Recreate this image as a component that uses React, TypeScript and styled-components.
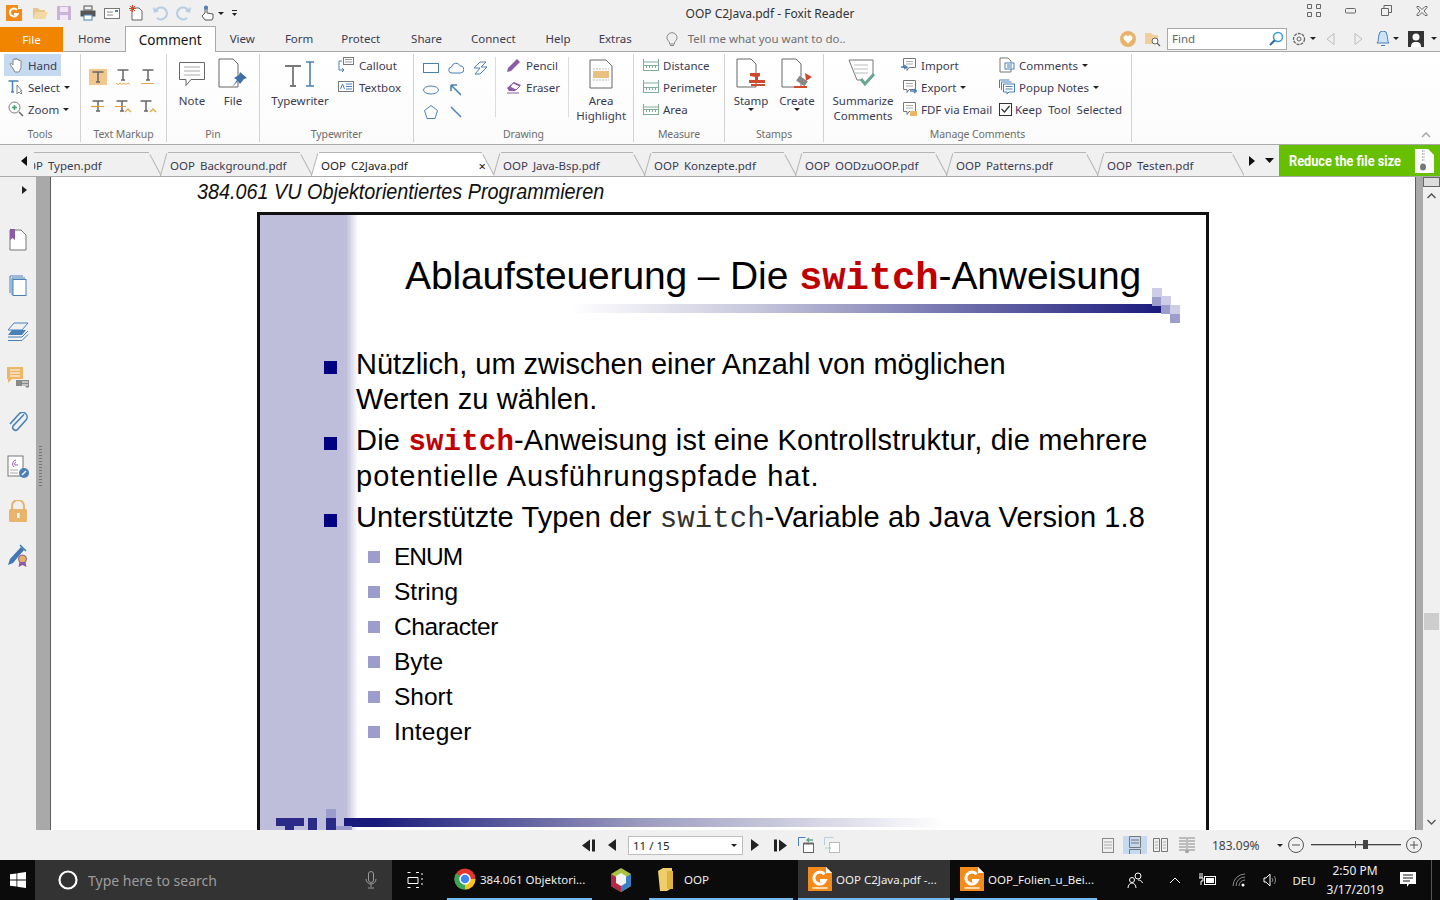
import React from 'react';
import styled, { createGlobalStyle } from 'styled-components';

const uiFont = `'Noto Sans', 'DejaVu Sans', sans-serif`;
const slideFont = `'Liberation Sans', Arial, sans-serif`;
const blue = '#4a80b8';
const orange = '#e9b36c';
const ink = '#2b2b3f';

const GlobalStyle = createGlobalStyle`
  html, body { margin: 0; padding: 0; width: 1440px; height: 900px; overflow: hidden; background: #f0f0f0; }
  body { font-family: ${uiFont}; font-size: 11.5px; color: ${ink}; }
  * { box-sizing: border-box; }
`;

/* ---------- drawings ---------- */

type IconProps = { w?: number; h?: number; children: React.ReactNode; vb?: string };

const SvgBase = styled.svg`
  display: block;
  flex: none;
`;

const Svg = ({ w = 16, h = 16, vb, children }: IconProps) => (
  <SvgBase width={w} height={h} viewBox={vb || `0 0 ${w} ${h}`} fill="none">
    {children}
  </SvgBase>
);

const Spacer = styled.span<{ $w: number }>`
  width: ${p => p.$w}px;
  flex: none;
`;

const Caret = styled.span<{ $tight?: boolean }>`
  display: inline-block;
  width: 0;
  height: 0;
  flex: none;
  margin-left: ${p => (p.$tight ? -6 : 0)}px;
  border-left: 3px solid transparent;
  border-right: 3px solid transparent;
  border-top: 3px solid #222;
`;

const FoxitLogo = ({ size = 16, label = false }: { size?: number; label?: boolean }) => (
  <Svg w={size} h={size} vb="0 0 16 16">
    <path d="M0 0h12l4 4v12H0z" fill="#f28a1c" />
    <path d="M12 0l4 4h-4z" fill="#fff" />
    <path d="M11 4.800A4 4 0 1 0 11.600 9H8" stroke="#fff" strokeWidth="2" fill="none" />
    {label && <rect x="3" y="13.300" width="10" height="1.400" fill="#ffd9a8" />}
  </Svg>
);

const T = ({ color = '#666' }: { color?: string }) => (
  <path d="M2.500 3h11M8 3v10M6 13h4" stroke={color} strokeWidth="1.500" />
);

const markupIcons = [
  <Svg w={18} h={16} key="0"><rect width="18" height="16" fill="#f2c78e" /><g transform="translate(1 0)"><T /></g></Svg>,
  <Svg w={18} h={16} key="1"><g transform="translate(1 -2)"><T /></g><path d="M2 14l2 1.500 2-1.500 2 1.500 2-1.500 2 1.500 2-1.500 2 1.500" stroke="#e0ab55" /></Svg>,
  <Svg w={18} h={16} key="2"><g transform="translate(1 -2)"><T /></g><path d="M2 14.500h13" stroke="#e0ab55" /></Svg>,
  <Svg w={18} h={16} key="3"><g transform="translate(1 0)"><T /></g><path d="M2 8.500h13" stroke="#e0a030" strokeWidth="1.200" /></Svg>,
  <Svg w={18} h={16} key="4"><g transform="translate(0 0)"><T /></g><path d="M1 8.500h11M11 14l3-3 3 3" stroke="#e0a030" strokeWidth="1.100" /></Svg>,
  <Svg w={18} h={16} key="5"><g transform="translate(-1 0)"><T /></g><path d="M11 14l3-3 3 3" stroke="#e0a030" strokeWidth="1.100" /></Svg>,
];

const shapeIcons = [
  <Svg key="0"><rect x="0.500" y="3.500" width="15" height="9" stroke={blue} /></Svg>,
  <Svg key="1"><path d="M4 13a3 3 0 0 1-.5-6 4.500 4.500 0 0 1 8.500-1.200A3.600 3.600 0 0 1 12.500 13z" stroke={blue} /></Svg>,
  <Svg key="2"><path d="M1 8l6-6h6L8 7h6l-7 7H2l5-6z" stroke={blue} /></Svg>,
  <Svg key="3"><ellipse cx="8" cy="8" rx="7.500" ry="4" stroke={blue} /></Svg>,
  <Svg key="4"><path d="M3 3l10 10M3 3h6M3 3v6" stroke={blue} strokeWidth="1.600" /></Svg>,
  <span key="5" />,
  <Svg key="6"><path d="M8 1.500l6.500 5-2.500 8H4l-2.500-8z" stroke={blue} /></Svg>,
  <Svg key="7"><path d="M3 3l10 10" stroke={blue} strokeWidth="1.400" /></Svg>,
  <span key="8" />,
];

const PageShape = () => <path d="M1 1h14l5 5v23H1z" stroke="#666" fill="#fff" />;

const MeasureIcon = ({ top = 0 }: { top?: number }) => (
  <Svg>
    <path d={`M0.500 ${2 + top}v10M15.500 ${2 + top}v10M1 ${5 + top}h14`} stroke="#7fae9a" />
    <rect x="0.500" y="8.500" width="15" height="5" stroke="#7fae9a" />
    <path d="M3.500 9v2M6.500 9v2M9.500 9v2M12.500 9v2" stroke="#7fae9a" />
  </Svg>
);

const CommentBox = ({ children }: { children?: React.ReactNode }) => (
  <Svg>
    <path d="M2.500 1.500h12v9H8l-2 3v-3H2.500z" stroke="#777" fill="#fff" />
    <path d="M5 4.500h7M5 7h7" stroke="#aaa" />
    {children}
  </Svg>
);

const sidebarIcons = [
  { nudge: 0, icon: <Svg w={18} h={22}><path d="M1 1h11l5 5v15H1z" stroke="#777" fill="#fff" /><path d="M1 0h5v11L3.500 9 1 11z" fill="#8b5aa8" /></Svg> },
  { nudge: 1, icon: <Svg w={18} h={22}><path d="M1 18V1h13M3 20V3h13" stroke={blue} /><rect x="4" y="4.500" width="13" height="16" stroke={blue} fill="#fff" /></Svg> },
  { nudge: 2, icon: <Svg w={22} h={20}><path d="M7 1h14l-6 7H1zM1 15h14l6-6" stroke={blue} /><path d="M5 8h14l-4 5H1z" fill={blue} /><path d="M1 18.500h14l6-6" stroke={blue} /></Svg> },
  { nudge: 3, icon: <Svg w={22} h={22}><path d="M0 0h16v12H5l-4 4v-4H0z" fill="#edb566" /><path d="M3 3h10M3 6h10M3 9h10" stroke="#fff" /><path d="M9 13h13v7l-2 1-2-2H9z" fill="#888" /><path d="M15 15h6M15 18h6" stroke="#fff" /></Svg> },
  { nudge: 3, icon: <Svg w={20} h={22}><path d="M16 3.500L5 15a3 3 0 0 0 4 4l9-10a4.500 4.500 0 0 0-7-6L2 13" stroke={blue} strokeWidth="1.600" transform="translate(0 -1)" /></Svg> },
  { nudge: 1, icon: <Svg w={22} h={23}><rect x="1" y="1" width="15" height="20" stroke="#777" fill="#fff" /><path d="M9 5a4 4 0 0 0-2 7M9 7a2 2 0 0 0-1 3h3" stroke="#9b5fb5" /><path d="M3 15h8M3 18h8" stroke="#aaa" /><circle cx="17" cy="18" r="5" fill={blue} /><path d="M15 20l4-4" stroke="#fff" strokeWidth="1.500" /></Svg> },
  { nudge: 1, icon: <Svg w={20} h={23}><path d="M4 10V6a6 6 0 0 1 12 0v4" stroke={orange} strokeWidth="2" /><rect x="1" y="9" width="18" height="13" rx="1.500" fill={orange} /><rect x="9" y="13" width="2.500" height="5" fill="#fff" /></Svg> },
  { nudge: 0, icon: <Svg w={22} h={24}><path d="M1 21l2-6L14 3l3 3L6 19z" fill="#3f78b5" /><path d="M13 1l6 6" stroke="#3f78b5" strokeWidth="1.500" /><circle cx="15.500" cy="15" r="4" fill="#e7b25f" stroke="#8b5aa8" /><path d="M12.500 18l-1 5 4-2 4 2-1-5" fill="#8b5aa8" /></Svg> },
];

/* ---------- title bar ---------- */

const TitleBar = styled.header`
  height: 26px;
  display: flex;
  align-items: center;
  background: #f0f0f0;
`;

const QuickAccess = styled.div`
  display: flex;
  align-items: center;
  gap: 8px;
  padding-left: 6px;
  width: 560px;
`;

const LogoSlot = styled.span`
  margin-right: 2px;
`;

const WindowTitle = styled.div`
  flex: 1;
  text-align: center;
  padding-right: 327px;
  font-size: 12px;
  color: #333;
  white-space: nowrap;
`;

const WindowButtons = styled.div`
  display: flex;
  align-items: center;
  gap: 24px;
  padding: 0 12px 5px 0;
`;

/* ---------- menu tabs ---------- */

const MenuBar = styled.nav`
  height: 26px;
  display: flex;
  align-items: stretch;
  background: #f0f0f0;
  border-bottom: 1px solid #a9a9a9;
`;

const FileTab = styled.div`
  width: 63px;
  height: 25px;
  margin-top: 1px;
  background: #f28500;
  color: #fff;
  display: flex;
  align-items: center;
  justify-content: center;
`;

const MenuTab = styled.div<{ $left: number }>`
  margin-left: ${p => p.$left}px;
  display: flex;
  align-items: center;
  color: #3b3b52;
`;

const ActiveMenuTab = styled.div`
  width: 91px;
  height: 26px;
  margin-left: 14px;
  background: #fff;
  border: 1px solid #a9a9a9;
  border-bottom: none;
  display: flex;
  align-items: center;
  justify-content: center;
  font-size: 13.500px;
  color: #111;
`;

const TellMe = styled.div`
  margin-left: 33px;
  display: flex;
  align-items: center;
  gap: 9px;
  color: #6f6f6f;
`;

const MenuRight = styled.div`
  margin-left: auto;
  display: flex;
  align-items: center;
  padding-right: 3px;
`;

const FindBox = styled.div`
  width: 120px;
  height: 22px;
  margin: 0 5px 0 6px;
  background: #fff;
  border: 1px solid #a9a9a9;
  display: flex;
  align-items: center;
  justify-content: space-between;
  padding: 0 2px 0 4px;
  color: #666;
`;

/* ---------- ribbon ---------- */

const Ribbon = styled.section`
  height: 93px;
  display: flex;
  background: linear-gradient(#fff, #fbfbfb);
  border-bottom: 1px solid #a9a9a9;
  position: relative;
`;

const Group = styled.div<{ $w: number }>`
  width: ${p => p.$w}px;
  flex: none;
  display: flex;
  flex-direction: column;
  border-right: 1px solid #d2d2d2;
  margin: 2px 0 2px;
`;

const GroupBody = styled.div`
  height: 67px;
  display: flex;
  align-items: flex-start;
`;

const GroupLabel = styled.div`
  margin-top: auto;
  height: 16px;
  line-height: 16px;
  text-align: center;
  font-size: 10.500px;
  letter-spacing: -0.1px;
  color: #6d6d6d;
`;

const SmallColumn = styled.div<{ $left: number; $w?: number }>`
  margin-left: ${p => p.$left}px;
  width: ${p => (p.$w ? `${p.$w}px` : 'auto')};
  flex: none;
  display: flex;
  flex-direction: column;
`;

const SmallTool = styled.div<{ $active?: boolean; $gap?: number; $pad?: number; $w?: number; $wide?: boolean }>`
  height: 22px;
  width: ${p => (p.$w ? `${p.$w}px` : 'auto')};
  padding-left: ${p => p.$pad ?? 0}px;
  display: flex;
  align-items: center;
  gap: ${p => p.$gap ?? 4}px;
  white-space: nowrap;
  word-spacing: ${p => (p.$wide ? 3 : 0)}px;
  color: #3b3b52;
  background: ${p => (p.$active ? '#c5d9f1' : 'transparent')};
`;

const LargeTool = styled.div<{ $w: number; $left?: number }>`
  width: ${p => p.$w}px;
  margin-left: ${p => p.$left ?? 0}px;
  flex: none;
  display: flex;
  flex-direction: column;
  align-items: center;
  line-height: 15px;
  color: #3b3b52;
  text-align: center;
`;

const LargeIcon = styled.div`
  height: 39px;
  display: flex;
  align-items: center;
  justify-content: center;
`;

const IconGrid = styled.div<{ $cols: number; $cw: number; $ch: number; $left: number; $top: number }>`
  display: grid;
  grid-template-columns: repeat(${p => p.$cols}, ${p => p.$cw}px);
  grid-auto-rows: ${p => p.$ch}px;
  place-items: center;
  margin: ${p => p.$top}px 0 0 ${p => p.$left}px;
`;

const InnerRule = styled.div<{ $left: number }>`
  width: 1px;
  height: 60px;
  margin: 3px 0 0 ${p => p.$left}px;
  background: #dcdcdc;
  flex: none;
`;

const Checkbox = styled.span`
  width: 13px;
  height: 13px;
  border: 1px solid #333;
  background: #fff;
  display: flex;
  align-items: center;
  justify-content: center;
  flex: none;
`;

const CollapseButton = styled.div`
  position: absolute;
  right: 9px;
  bottom: 6px;
`;

/* ---------- document tabs ---------- */

const DocBar = styled.section`
  height: 32px;
  display: flex;
  align-items: stretch;
  background: #f0f0f0;
  border-bottom: 1px solid #a9a9a9;
`;

const DocArrow = styled.div<{ $w: number; $pad?: number }>`
  width: ${p => p.$w}px;
  flex: none;
  display: flex;
  align-items: center;
  justify-content: center;
  padding-left: ${p => p.$pad ?? 0}px;
`;

const DocStrip = styled.div`
  width: 1210px;
  flex: none;
  overflow: hidden;
  display: flex;
  padding-top: 7px;
`;

const DocTab = styled.div<{ $w: number; $active?: boolean; $shift?: number }>`
  width: ${p => p.$w}px;
  margin-left: ${p => p.$shift ?? 0}px;
  flex: none;
  height: 24px;
  position: relative;
  display: flex;
  align-items: center;
  padding: 2px 0 0 12px;
  color: ${p => (p.$active ? '#222' : '#3b3b52')};
  background: ${p =>
    p.$active
      ? `linear-gradient(106deg, transparent 50%, #fff 50%) left / 12px 100% no-repeat,
         linear-gradient(62deg, #fff 50%, transparent 50%) right / 14px 100% no-repeat,
         linear-gradient(#fff, #fff) 12px 0 / calc(100% - 26px) 100% no-repeat`
      : 'transparent'};
  white-space: nowrap;
  word-spacing: 2px;
  z-index: ${p => (p.$active ? 2 : 1)};

  &::before,
  &::after {
    content: '';
    position: absolute;
    top: 1px;
    width: 1px;
    height: 24px;
    background: #b5b5b5;
  }

  &::before {
    left: 5px;
    transform: rotate(16deg);
  }

  &::after {
    right: ${p => (p.$active ? 6 : 2)}px;
    transform: rotate(-28deg);
  }
`;

const TabTop = styled.span<{ $active?: boolean }>`
  position: absolute;
  top: 0;
  left: 10px;
  right: ${p => (p.$active ? 13 : 9)}px;
  height: 1px;
  background: #b5b5b5;
`;

const TabClose = styled.span`
  position: absolute;
  right: 9px;
  top: 8px;
  font-size: 13px;
  line-height: 13px;
  color: #111;
`;

const ReduceBanner = styled.div`
  margin-left: auto;
  width: 161px;
  background: #66bf00;
  color: #fff;
  display: flex;
  align-items: center;
  justify-content: space-between;
  padding: 0 6px 0 10px;
`;

const BannerText = styled.span`
  display: inline-block;
  font-family: 'Roboto', ${uiFont};
  font-weight: 700;
  font-size: 15px;
  white-space: nowrap;
  transform-origin: left center;
  transform: scaleX(0.85);
  width: 115px;
`;

/* ---------- work area ---------- */

const Work = styled.main`
  height: 653px;
  display: flex;
  overflow: hidden;
`;

const SideRail = styled.aside`
  width: 36px;
  flex: none;
  background: #f0f0f0;
  display: flex;
  flex-direction: column;
  align-items: center;
  padding-top: 8px;
`;

const RailCaret = styled.div`
  align-self: flex-end;
  margin: 1px 9px 23px 0;
  width: 0;
  height: 0;
  border-top: 4px solid transparent;
  border-bottom: 4px solid transparent;
  border-left: 5px solid #222;
`;

const RailIcon = styled.div<{ $nudge: number }>`
  height: 45.200px;
  padding-top: ${p => p.$nudge * 2}px;
  display: flex;
  align-items: center;
  justify-content: center;
`;

const Splitter = styled.div`
  width: 15px;
  flex: none;
  background: #a9a9a9;
  border-right: 1px solid #5f5f5f;
  position: relative;

  &::after {
    content: '';
    position: absolute;
    left: 3px;
    top: 268px;
    width: 3px;
    height: 42px;
    background-image: radial-gradient(#777 0.700px, transparent 0.800px);
    background-size: 2px 3px;
  }
`;

const PageArea = styled.div`
  flex: 1;
  background: #fff;
  padding-left: 146px;
  min-width: 0;
`;

const RunningHead = styled.div`
  height: 35px;
  padding-bottom: 6px;
  display: flex;
  align-items: center;
  font-family: ${slideFont};
  font-style: italic;
  font-size: 22px;
  color: #111;
  transform-origin: left center;
  transform: scaleX(0.9);
  white-space: nowrap;
`;

const Slide = styled.article`
  width: 952px;
  height: 640px;
  margin-left: 60px;
  border: 3px solid #111;
  border-bottom: none;
  position: relative;
  background: linear-gradient(90deg, #bebedb 0, #bebedb 86px, #fff 98px);
  padding-left: 64px;
  font-family: ${slideFont};
  color: #000;
`;

const SlideTitle = styled.h1`
  margin: 0;
  padding-top: 36px;
  padding-left: 81px;
  height: 87px;
  font-weight: 400;
  font-size: 39px;
  line-height: 50px;
  letter-spacing: -0.130px;
  white-space: nowrap;
`;

const Code = styled.span<{ $plain?: boolean; $size: number }>`
  font-family: 'Liberation Mono', 'Courier New', monospace;
  font-weight: ${p => (p.$plain ? 400 : 700)};
  color: ${p => (p.$plain ? '#333' : '#c00000')};
  font-size: ${p => p.$size}px;
`;

const TitleRule = styled.div`
  position: absolute;
  left: 311px;
  top: 89px;
  width: 592px;
  height: 9px;
  background: linear-gradient(90deg, #fff, #c9c9de 30%, #1a1a7c 100%);
`;

const Pixel = styled.i<{ $x: number; $y: number; $dark?: boolean }>`
  position: absolute;
  left: ${p => p.$x}px;
  top: ${p => p.$y}px;
  width: 10px;
  height: 9px;
  background: ${p => (p.$dark ? '#9c9ccd' : '#cdcde6')};
`;

const Points = styled.ul`
  list-style: none;
  margin: 0;
  padding: 45px 0 0 0;
`;

const Point = styled.li`
  display: flex;
  font-size: 29px;
  margin-bottom: 5.700px;
  white-space: nowrap;
`;

const PointLine = styled.span<{ $track?: number }>`
  display: block;
  height: 35.300px;
  line-height: 35.300px;
  letter-spacing: ${p => p.$track ?? 0}px;
`;

const Bullet = styled.span<{ $sub?: boolean }>`
  width: ${p => (p.$sub ? 12 : 13)}px;
  height: ${p => (p.$sub ? 12 : 13)}px;
  flex: none;
  background: ${p => (p.$sub ? '#9c9ccd' : '#000080')};
  margin-top: ${p => (p.$sub ? 12 : 14)}px;
  margin-right: ${p => (p.$sub ? 14 : 19)}px;
`;

const SubPoints = styled.ul`
  list-style: none;
  margin: -2px 0 0 44px;
  padding: 0;
`;

const SubPoint = styled.li<{ $track?: number }>`
  display: flex;
  font-size: 24.500px;
  line-height: 35px;
  letter-spacing: ${p => p.$track ?? 0}px;
  white-space: nowrap;
`;

const FootRule = styled.div`
  position: absolute;
  left: 84px;
  top: 603px;
  width: 600px;
  height: 9px;
  background: linear-gradient(90deg, #1a1a7c, #1a1a7c 5%, #9c9cc0 50%, #fff);
`;

const FootBlock = styled.i<{ $x: number; $y: number; $w: number; $h: number; $light?: boolean }>`
  position: absolute;
  left: ${p => p.$x}px;
  top: ${p => p.$y}px;
  width: ${p => p.$w}px;
  height: ${p => p.$h}px;
  background: ${p => (p.$light ? '#9c9ccd' : '#2a2a88')};
`;

const RightGutter = styled.div`
  width: 8px;
  flex: none;
  background: #a9a9a9;
  border-left: 1px solid #5f5f5f;
`;

const ScrollTrack = styled.div`
  width: 17px;
  flex: none;
  background: #f0f0f0;
  position: relative;
  display: flex;
  flex-direction: column;
  align-items: center;
`;

const SplitBox = styled.div`
  width: 17px;
  height: 10px;
  background: #dcdcdc;
  border: 1px solid #666;
`;

const ScrollArrow = styled.div<{ $bottom?: boolean }>`
  height: 17px;
  display: flex;
  align-items: center;
  justify-content: center;
  margin-top: ${p => (p.$bottom ? 'auto' : '0')};
`;

const ScrollThumb = styled.div`
  position: absolute;
  left: 1px;
  top: 436px;
  width: 15px;
  height: 17px;
  background: #cdcdcd;
`;

/* ---------- status bar ---------- */

const StatusBar = styled.footer`
  height: 30px;
  display: flex;
  align-items: center;
  background: #f0f0f0;
  padding-left: 582px;
`;

const PageBox = styled.div`
  width: 115px;
  height: 19px;
  margin: 0 8px 0 12px;
  background: #fff;
  border: 1px solid #bdbdbd;
  display: flex;
  align-items: center;
  justify-content: space-between;
  padding: 0 5px 0 4px;
  color: #222;
`;

const ViewMode = styled.div<{ $active?: boolean; $left: number }>`
  width: 24px;
  height: 18px;
  margin-left: ${p => p.$left}px;
  display: flex;
  align-items: center;
  justify-content: center;
  background: ${p => (p.$active ? '#c5d9f1' : 'transparent')};
`;

const ZoomValue = styled.span`
  margin-left: 13px;
  width: 65px;
  font-size: 12px;
  color: #444;
`;

const SliderTrack = styled.div`
  width: 90px;
  height: 2px;
  margin: 0 5px 0 7px;
  background: linear-gradient(#444 50%, #bbb 50%);
  position: relative;
`;

const SliderThumb = styled.span`
  position: absolute;
  left: 52px;
  top: -4px;
  width: 5px;
  height: 9px;
  background: #444;
`;

const SliderTick = styled.span`
  position: absolute;
  left: 44px;
  top: -3px;
  width: 1px;
  height: 7px;
  background: #555;
`;

/* ---------- taskbar ---------- */

const Taskbar = styled.footer`
  height: 40px;
  display: flex;
  align-items: stretch;
  background: #0b0b0b;
  color: #eee;
  font-size: 11.500px;
`;

const StartButton = styled.div`
  width: 35px;
  flex: none;
  display: flex;
  align-items: center;
  justify-content: center;
`;

const SearchBox = styled.div`
  width: 357px;
  flex: none;
  background: #333;
  display: flex;
  align-items: center;
  padding: 0 15px 0 23px;
  color: #9c9c9c;
  font-size: 14px;
`;

const SearchText = styled.span`
  margin-left: 10px;
  flex: 1;
`;

const TaskIcon = styled.div<{ $w: number }>`
  width: ${p => p.$w}px;
  flex: none;
  display: flex;
  align-items: center;
  justify-content: center;
`;

const TaskApp = styled.div<{ $w: number; $active?: boolean; $left?: number; $pad?: number; $gap?: number }>`
  width: ${p => p.$w}px;
  margin-left: ${p => p.$left ?? 0}px;
  flex: none;
  display: flex;
  align-items: center;
  gap: ${p => p.$gap ?? 4}px;
  padding-left: ${p => p.$pad ?? 9}px;
  background: ${p => (p.$active ? '#333' : 'transparent')};
  border-bottom: 2px solid #76b9ed;
  white-space: nowrap;
`;

const Tray = styled.div`
  margin-left: auto;
  display: flex;
  align-items: center;
`;

const Clock = styled.div`
  width: 52px;
  display: flex;
  flex-direction: column;
  align-items: center;
  font-size: 12px;
  line-height: 19px;
  white-space: nowrap;
`;

const ShowDesktop = styled.span`
  width: 9px;
  height: 40px;
  flex: none;
  margin-left: -4px;
  border-left: 1px solid #555;
`;

/* ---------- data ---------- */

const menuItems: [string, number][] = [
  ['View', 14], ['Form', 30], ['Protect', 28], ['Share', 31], ['Connect', 29], ['Help', 30], ['Extras', 28],
];

const docTabs = [
  { name: 'OOP Typen.pdf', w: 152, shift: -28 },
  { name: 'OOP Background.pdf', w: 151 },
  { name: 'OOP C2Java.pdf', w: 186, active: true },
  { name: 'OOP Java-Bsp.pdf', w: 151, shift: -4 },
  { name: 'OOP Konzepte.pdf', w: 151 },
  { name: 'OOP OODzuOOP.pdf', w: 151 },
  { name: 'OOP Patterns.pdf', w: 151 },
  { name: 'OOP Testen.pdf', w: 146 },
];

const subItems = [
  { label: 'ENUM', track: -1 },
  { label: 'String' },
  { label: 'Character', track: -0.4 },
  { label: 'Byte' },
  { label: 'Short' },
  { label: 'Integer', track: 0.2 },
];

const titlePixels = [
  { x: 892, y: 73 }, { x: 892, y: 82, dark: true }, { x: 901, y: 81 }, { x: 901, y: 90, dark: true }, { x: 910, y: 90 }, { x: 910, y: 99, dark: true },
];

export default function App() {
  return (
    <>
      <GlobalStyle />
      <TitleBar>
        <QuickAccess>
          <LogoSlot><FoxitLogo /></LogoSlot>
          <Svg><path d="M1 3h5l2 2h5v2H4L1 14z" fill="#e8c58a" /><path d="M4 7h12l-3 7H1z" fill="#f3d9a6" /></Svg>
          <Svg><path d="M1 1h14v14H1z" fill="#c9b4d8" /><rect x="4" y="2" width="8" height="5" fill="#efe8f4" /><rect x="4" y="10" width="8" height="5" fill="#efe8f4" /></Svg>
          <Svg><rect x="4" y="1" width="8" height="4" stroke="#555" /><rect x="0.500" y="5.500" width="15" height="6" fill="#555" /><rect x="4" y="10" width="8" height="5" fill="#fff" stroke="#4a80b8" /></Svg>
          <Svg><rect x="0.500" y="3.500" width="15" height="10" stroke="#777" fill="#fff" /><path d="M3 7h6M3 10h6" stroke="#888" /><rect x="11" y="5" width="3" height="2" fill="#4a80b8" /></Svg>
          <Svg><path d="M4 3h7l3 3v9H4z" stroke="#666" fill="#fff" /><path d="M4.500 0v7M1 3.500h7M2 1l5 5M7 1L2 6" stroke="#d9472b" /></Svg>
          <Svg><path d="M4 5a6 6 0 1 1 1 8" stroke="#b6cde3" strokeWidth="2" /><path d="M1 2l1 6 5-2z" fill="#b6cde3" /></Svg>
          <Svg><path d="M12 5a6 6 0 1 0-1 8" stroke="#b6cde3" strokeWidth="2" /><path d="M15 2l-1 6-5-2z" fill="#b6cde3" /></Svg>
          <Svg><path d="M5 8V2.500a1 1 0 0 1 2 0V8l6 1v4l-1 2H5l-3-4z" stroke="#555" fill="#fff" /><circle cx="6" cy="2.500" r="2" fill="#4a80b8" /></Svg>
          <Caret $tight />
          <Svg w={5} h={6}><path d="M0 0.500h5" stroke="#222" /><path d="M0 3h5L2.500 6z" fill="#222" /></Svg>
        </QuickAccess>
        <WindowTitle>OOP C2Java.pdf - Foxit Reader</WindowTitle>
        <WindowButtons>
          <Svg w={14} h={13}><path d="M0.500 0.500h4v4h-4zM9.500 0.500h4v4h-4zM0.500 8.500h4v4h-4zM9.500 8.500h4v4h-4z" stroke="#666" /></Svg>
          <Svg w={12} h={6}><rect x="0.500" y="0.500" width="10" height="4.500" rx="1" stroke="#666" /></Svg>
          <Svg w={11} h={11}><path d="M3 3V0.500h7.500v7H8M0.500 3.500h7v7h-7z" stroke="#666" /></Svg>
          <Svg w={12} h={10}><path d="M1 0.500h2l3 3 3-3h2v1L8 5l3 3.500v1H9l-3-3-3 3H1v-1L4 5 1 1.500z" stroke="#666" /></Svg>
        </WindowButtons>
      </TitleBar>

      <MenuBar>
        <FileTab>File</FileTab>
        <MenuTab $left={15}>Home</MenuTab>
        <ActiveMenuTab>Comment</ActiveMenuTab>
        {menuItems.map(([label, left]) => (
          <MenuTab key={label} $left={left}>{label}</MenuTab>
        ))}
        <TellMe>
          <Svg w={14} h={16}><path d="M4.500 11a5 5 0 1 1 5 0v2h-5zM5 14.500h4" stroke="#888" /></Svg>
          Tell me what you want to do..
        </TellMe>
        <MenuRight>
          <Svg><circle cx="8" cy="8" r="8" fill="#e9b36c" /><path d="M8 12.500L3.800 8.200a2.500 2.500 0 0 1 4.200-2.700 2.500 2.500 0 0 1 4.200 2.700z" fill="#fff" /></Svg>
          <Spacer $w={9} />
          <Svg><path d="M0 2h6l2 2h5v9H0z" fill="#f0cf9b" /><circle cx="10" cy="10" r="3" stroke="#666" fill="#fff" /><path d="M12 12l3 3" stroke="#666" strokeWidth="1.300" /></Svg>
          <FindBox>
            Find
            <Svg><circle cx="10" cy="6" r="4.500" stroke="#3d9ad1" strokeWidth="1.500" /><path d="M7 9l-5 5" stroke="#2f6ea5" strokeWidth="2" /></Svg>
          </FindBox>
          <Svg w={14} h={14}><circle cx="7" cy="7" r="5.500" stroke="#666" strokeDasharray="3 1" strokeWidth="1.300" /><circle cx="7" cy="7" r="2" stroke="#666" /></Svg>
          <Spacer $w={4} />
          <Caret />
          <Spacer $w={10} />
          <Svg w={9} h={12}><path d="M8 0.500v11L1 6z" stroke="#bdbdbd" /></Svg>
          <Spacer $w={19} />
          <Svg w={9} h={12}><path d="M1 0.500v11L8 6z" stroke="#bdbdbd" /></Svg>
          <Spacer $w={13} />
          <Svg w={14} h={16}><path d="M1 12c2-2 1-5 2-8a4 4 0 0 1 8 0c1 3 0 6 2 8z" fill="#cfe3f7" stroke={blue} /><path d="M5 14.500h4" stroke={blue} /></Svg>
          <Spacer $w={3} />
          <Caret />
          <Spacer $w={9} />
          <Svg><rect width="16" height="16" fill="#333" /><circle cx="8" cy="6" r="3.500" fill="#fff" /><path d="M3 16c0-4 2-5 5-5s5 1 5 5z" fill="#fff" /></Svg>
          <Spacer $w={7} />
          <Caret />
        </MenuRight>
      </MenuBar>

      <Ribbon>
        <Group $w={81}>
          <GroupBody>
            <SmallColumn $left={4} $w={70}>
              <SmallTool $active $w={57} $pad={5}>
                <Svg w={15} h={17}><path d="M3 10L1 7c0-1 1-1 2 0l1 1V3c0-1.500 2-1.500 2 0V2c0-1 2-1 2 0v1c0-1 2-1 2 0v1c0-1 2-1 2 0v7l-2 4H6z" fill="#fff" stroke="#888" /></Svg>
                Hand
              </SmallTool>
              <SmallTool $pad={4}>
                <Svg w={16} h={16}><path d="M0.500 2h10M4.500 2v11M3 13h3" stroke={blue} strokeWidth="1.500" /><path d="M9 6v9l2-2 2 2 1-1-2-2h2z" fill="#fff" stroke="#888" /></Svg>
                Select
                <Caret />
              </SmallTool>
              <SmallTool $pad={4}>
                <Svg><circle cx="6.500" cy="6.500" r="5.500" stroke="#777" /><path d="M4 6.500h5M6.500 4v5" stroke="#4a9a70" strokeWidth="1.500" /><path d="M11 11l4 4" stroke="#666" strokeWidth="1.500" /></Svg>
                Zoom
                <Caret />
              </SmallTool>
            </SmallColumn>
          </GroupBody>
          <GroupLabel>Tools</GroupLabel>
        </Group>

        <Group $w={86}>
          <GroupBody>
            <IconGrid $cols={3} $cw={25} $ch={29} $left={4} $top={8}>{markupIcons}</IconGrid>
          </GroupBody>
          <GroupLabel>Text Markup</GroupLabel>
        </Group>

        <Group $w={93}>
          <GroupBody>
            <LargeTool $w={44} $left={3}>
              <LargeIcon>
                <Svg w={27} h={26}><path d="M0.500 1.500h25v17H12l-5 6v-6H0.500z" stroke="#666" fill="#fff" /><path d="M5 6h16M5 10h16M5 14h16" stroke="#aaa" /></Svg>
              </LargeIcon>
              Note
            </LargeTool>
            <LargeTool $w={38}>
              <LargeIcon>
                <Svg w={31} h={31}><PageShape /><path d="M22 14l7 6-3 1-4 5-2-3-6 6 5-7-3-2 5-3z" fill="#3f6fa8" /></Svg>
              </LargeIcon>
              File
            </LargeTool>
          </GroupBody>
          <GroupLabel>Pin</GroupLabel>
        </Group>

        <Group $w={154}>
          <GroupBody>
            <LargeTool $w={76} $left={2}>
              <LargeIcon>
                <Svg w={32} h={26}><path d="M1 5h16M9 5v20M6 25h6" stroke="#777" strokeWidth="1.800" /><path d="M22 1h8M26 1v24M22 25h8" stroke={blue} strokeWidth="1.600" /></Svg>
              </LargeIcon>
              Typewriter
            </LargeTool>
            <SmallColumn $left={0}>
              <SmallTool $gap={5}>
                <Svg><rect x="5.500" y="0.500" width="10" height="7" stroke="#777" /><path d="M7 2.500h7M7 5h7" stroke="#999" /><path d="M4 4H1v9h5M4 11l2 2-2 2" stroke={blue} /></Svg>
                Callout
              </SmallTool>
              <SmallTool $gap={5}>
                <Svg><rect x="0.500" y="2.500" width="15" height="10" stroke="#777" /><path d="M2.500 10l2-5 2 5M8 5h6M8 7.500h6M8 10h6" stroke="#4a80b8" /></Svg>
                Textbox
              </SmallTool>
            </SmallColumn>
          </GroupBody>
          <GroupLabel>Typewriter</GroupLabel>
        </Group>

        <Group $w={220}>
          <GroupBody>
            <IconGrid $cols={3} $cw={25} $ch={22} $left={4} $top={3}>{shapeIcons}</IconGrid>
            <InnerRule $left={2} />
            <SmallColumn $left={10}>
              <SmallTool $gap={4}>
                <Svg><path d="M1 15l1-4 9-9 3 3-9 9z" fill="#8b5aa8" /></Svg>
                Pencil
              </SmallTool>
              <SmallTool $gap={4}>
                <Svg><path d="M3 12l-2-3 7-6 7 3-6 6z" fill="#8b5aa8" /><path d="M7 4l7 3-4 4-6-3z" fill="#fff" stroke="#8b5aa8" /><path d="M1 14h12" stroke="#8b5aa8" /></Svg>
                Eraser
              </SmallTool>
            </SmallColumn>
            <InnerRule $left={8} />
            <LargeTool $w={64}>
              <LargeIcon>
                <Svg w={24} h={30} vb="0 0 24 30"><path d="M1 1h16l6 6v22H1z" stroke="#666" fill="#fff" /><rect x="4" y="12" width="16" height="7" fill="#e8c07f" /><path d="M4 10h16M4 21h16" stroke="#bbb" strokeDasharray="2 1" /></Svg>
              </LargeIcon>
              Area<br />Highlight
            </LargeTool>
          </GroupBody>
          <GroupLabel>Drawing</GroupLabel>
        </Group>

        <Group $w={91}>
          <GroupBody>
            <SmallColumn $left={9}>
              <SmallTool $gap={4}><MeasureIcon />Distance</SmallTool>
              <SmallTool $gap={4}><MeasureIcon top={-1} />Perimeter</SmallTool>
              <SmallTool $gap={4}><MeasureIcon top={1} />Area</SmallTool>
            </SmallColumn>
          </GroupBody>
          <GroupLabel>Measure</GroupLabel>
        </Group>

        <Group $w={99}>
          <GroupBody>
            <LargeTool $w={50} $left={1}>
              <LargeIcon>
                <Svg w={30} h={31}><PageShape /><path d="M14 15h10v3l-2 1v3h7v3H13v-3h6v-3l-5-1z" fill="#cf4a2c" /><rect x="15" y="26" width="14" height="2" fill="#cf4a2c" /></Svg>
              </LargeIcon>
              Stamp
              <Caret />
            </LargeTool>
            <LargeTool $w={42}>
              <LargeIcon>
                <Svg w={32} h={31}><PageShape /><path d="M24 15l7 4-6 4z" fill="#cf4a2c" /><rect x="16" y="20" width="10" height="6" fill="#888" transform="rotate(35 21 23)" /><rect x="13" y="28" width="13" height="2" fill="#cf4a2c" /></Svg>
              </LargeIcon>
              Create
              <Caret />
            </LargeTool>
          </GroupBody>
          <GroupLabel>Stamps</GroupLabel>
        </Group>

        <Group $w={308}>
          <GroupBody>
            <LargeTool $w={64} $left={7}>
              <LargeIcon>
                <Svg w={30} h={30}><path d="M1 1h24v16l-7 8-4-4H9z" stroke="#777" fill="#fff" /><path d="M6 6h14M6 10h14M6 14h14" stroke="#bbb" /><path d="M13 20l4 5 9-10" stroke="#6aa58f" strokeWidth="3" /></Svg>
              </LargeIcon>
              Summarize<br />Comments
            </LargeTool>
            <SmallColumn $left={6} $w={98}>
              <SmallTool $gap={4}><CommentBox><path d="M0 10h5M3 8l3 2-3 2" stroke={blue} strokeWidth="1.300" /></CommentBox>Import</SmallTool>
              <SmallTool $gap={4}><CommentBox><path d="M9 12h6M13 10l2.500 2-2.500 2" stroke={blue} strokeWidth="1.300" /></CommentBox>Export<Caret /></SmallTool>
              <SmallTool $gap={4}><CommentBox><rect x="9" y="10" width="7" height="5" fill="#edb566" /></CommentBox>FDF via Email</SmallTool>
            </SmallColumn>
            <SmallColumn $left={0}>
              <SmallTool $gap={4}>
                <Svg><path d="M1 1h8l3 3v11H1z" stroke="#777" /><rect x="6" y="6" width="9" height="6" stroke={blue} fill="#fff" /><path d="M8 8h5M8 10h5" stroke={blue} /></Svg>
                Comments<Caret />
              </SmallTool>
              <SmallTool $gap={4}>
                <Svg><path d="M0.500 9V1h10M2.500 11V3h10" stroke={blue} /><path d="M4.500 5h11v8H10l-2 2v-2H4.500z" stroke={blue} fill="#fff" /><path d="M6.500 7.500h7M6.500 10h7" stroke={blue} /></Svg>
                Popup Notes<Caret />
              </SmallTool>
              <SmallTool $gap={3} $wide>
                <Checkbox><Svg w={9} h={8}><path d="M0.500 4l3 3 5-6" stroke="#333" strokeWidth="1.200" /></Svg></Checkbox>
                Keep Tool Selected
              </SmallTool>
            </SmallColumn>
          </GroupBody>
          <GroupLabel>Manage Comments</GroupLabel>
        </Group>

        <CollapseButton>
          <Svg w={10} h={6}><path d="M1 5l4-4 4 4" stroke="#aaa" strokeWidth="1.600" /></Svg>
        </CollapseButton>
      </Ribbon>

      <DocBar>
        <DocArrow $w={34} $pad={14}>
          <Svg w={6} h={10}><path d="M6 0v10L0 5z" fill="#111" /></Svg>
        </DocArrow>
        <DocStrip>
          {docTabs.map(t => (
            <DocTab key={t.name} $w={t.w} $active={t.active} $shift={t.shift}>
              <TabTop $active={t.active} />
              {t.name}
              {t.active && <TabClose>×</TabClose>}
            </DocTab>
          ))}
        </DocStrip>
        <DocArrow $w={15}>
          <Svg w={6} h={10}><path d="M0 0v10l6-5z" fill="#111" /></Svg>
        </DocArrow>
        <DocArrow $w={20}>
          <Svg w={9} h={5}><path d="M0 0h9L4.500 5z" fill="#111" /></Svg>
        </DocArrow>
        <ReduceBanner>
          <BannerText>Reduce the file size</BannerText>
          <Svg w={19} h={24}><path d="M0 0h13l6 6v18H0z" fill="#fff" /><path d="M7 2h3M7 5h3M7 8h3M7 11h3" stroke="#777" strokeDasharray="1.500 1" /><ellipse cx="8" cy="18" rx="3" ry="3.500" fill="#777" /></Svg>
        </ReduceBanner>
      </DocBar>

      <Work>
        <SideRail>
          <RailCaret />
          {sidebarIcons.map((item, i) => (
            <RailIcon key={i} $nudge={item.nudge}>{item.icon}</RailIcon>
          ))}
        </SideRail>
        <Splitter />
        <PageArea>
          <RunningHead>384.061 VU Objektorientiertes Programmieren</RunningHead>
          <Slide>
            <SlideTitle>
              Ablaufsteuerung – Die <Code $size={39}>switch</Code>-Anweisung
            </SlideTitle>
            <TitleRule />
            {titlePixels.map(px => (
              <Pixel key={`${px.x}-${px.y}`} $x={px.x} $y={px.y} $dark={px.dark} />
            ))}
            <Points>
              <Point>
                <Bullet />
                <div>
                  <PointLine>Nützlich, um zwischen einer Anzahl von möglichen</PointLine>
                  <PointLine $track={0.1}>Werten zu wählen.</PointLine>
                </div>
              </Point>
              <Point>
                <Bullet />
                <div>
                  <PointLine $track={0.2}>Die <Code $size={29}>switch</Code>-Anweisung ist eine Kontrollstruktur, die mehrere</PointLine>
                  <PointLine $track={1}>potentielle Ausführungspfade hat.</PointLine>
                </div>
              </Point>
              <Point>
                <Bullet />
                <PointLine $track={0.12}>Unterstützte Typen der <Code $size={29} $plain>switch</Code>-Variable ab Java Version 1.8</PointLine>
              </Point>
            </Points>
            <SubPoints>
              {subItems.map(item => (
                <SubPoint key={item.label} $track={item.track}>
                  <Bullet $sub />
                  {item.label}
                </SubPoint>
              ))}
            </SubPoints>
            <FootRule />
            <FootBlock $x={16} $y={603} $w={28} $h={8} />
            <FootBlock $x={25} $y={611} $w={9} $h={4} />
            <FootBlock $x={48} $y={603} $w={9} $h={12} />
            <FootBlock $x={66} $y={594} $w={10} $h={9} $light />
            <FootBlock $x={66} $y={603} $w={10} $h={12} />
            <FootBlock $x={76} $y={611} $w={16} $h={4} $light />
          </Slide>
        </PageArea>
        <RightGutter />
        <ScrollTrack>
          <SplitBox />
          <ScrollArrow>
            <Svg w={9} h={6}><path d="M0.500 5L4.500 1l4 4" stroke="#555" strokeWidth="1.500" /></Svg>
          </ScrollArrow>
          <ScrollThumb />
          <ScrollArrow $bottom>
            <Svg w={9} h={6}><path d="M0.500 1l4 4 4-4" stroke="#555" strokeWidth="1.300" /></Svg>
          </ScrollArrow>
        </ScrollTrack>
      </Work>

      <StatusBar>
        <Svg w={13} h={13}><path d="M8 0.500v12L0 6.500zM10 0.500h3v12h-3z" fill="#222" /></Svg>
        <Spacer $w={13} />
        <Svg w={8} h={12}><path d="M8 0v12L0 6z" fill="#222" /></Svg>
        <PageBox>
          11 / 15
          <Caret />
        </PageBox>
        <Svg w={8} h={12}><path d="M0 0v12l8-6z" fill="#222" /></Svg>
        <Spacer $w={15} />
        <Svg w={13} h={13}><path d="M0 0.500h3v12H0zM5 0.500v12l8-6z" fill="#222" /></Svg>
        <Spacer $w={11} />
        <Svg><rect x="5.500" y="6.500" width="10" height="9" stroke="#666" fill="#fff" /><path d="M5.500 6.500h10" stroke="#666" strokeWidth="2" /><path d="M0.500 9V0.500h7" stroke={blue} /><path d="M15 3H9M11 1L9 3l2 2" stroke="#5fa58a" strokeWidth="1.300" /></Svg>
        <Spacer $w={10} />
        <Svg><rect x="5.500" y="5.500" width="10" height="10" stroke="#bbb" fill="#fff" /><path d="M0.500 8V0.500h9" stroke="#b9cde3" /><path d="M1 11h6M5 9l2 2-2 2" stroke="#b5d3c6" /></Svg>
        <ViewMode $left={256}>
          <Svg w={12} h={15}><rect x="0.500" y="0.500" width="11" height="14" stroke="#888" /><path d="M2 4h8M2 7h8M2 10h8" stroke="#aaa" /></Svg>
        </ViewMode>
        <ViewMode $left={3} $active>
          <Svg w={12} h={18}><path d="M0.500 0.500h11v11h-11zM0.500 18v-4.500h11V18" stroke="#777" /><path d="M2 4h8M2 7h8" stroke="#777" /></Svg>
        </ViewMode>
        <ViewMode $left={1}>
          <Svg w={15} h={14}><path d="M0.500 0.500h6v13h-6zM8.500 0.500h6v13h-6z" stroke="#777" /><path d="M2 4h3M2 7h3M2 10h3M10 4h3M10 7h3M10 10h3" stroke="#aaa" /></Svg>
        </ViewMode>
        <ViewMode $left={3}>
          <Svg w={16} h={16}><path d="M0 1h7M9 1h7M0 4h7M9 4h7M0 7h7M9 7h7M0 10h7M9 10h7M0 13h7v3M9 16v-3h7M8 0v16" stroke="#888" /></Svg>
        </ViewMode>
        <ZoomValue>183.09%</ZoomValue>
        <Caret />
        <Spacer $w={5} />
        <Svg><circle cx="8" cy="8" r="7.500" stroke="#555" /><path d="M4 8h8" stroke="#555" /></Svg>
        <SliderTrack>
          <SliderTick />
          <SliderThumb />
        </SliderTrack>
        <Svg><circle cx="8" cy="8" r="7.500" stroke="#555" /><path d="M4 8h8M8 4v8" stroke="#555" /></Svg>
      </StatusBar>

      <Taskbar>
        <StartButton>
          <Svg vb="0 0 16 16"><path d="M0 2.300l6.500-.9V7.600H0zM7.300 1.300L16 0v7.600H7.300zM0 8.400h6.500v6.200L0 13.700zM7.300 8.400H16V16l-8.700-1.200z" fill="#fff" /></Svg>
        </StartButton>
        <SearchBox>
          <Svg w={20} h={20}><circle cx="10" cy="10" r="8.500" stroke="#fff" strokeWidth="2.200" /></Svg>
          <SearchText>Type here to search</SearchText>
          <Svg w={12} h={18}><rect x="3.500" y="0.500" width="5" height="11" rx="2.500" stroke="#999" /><path d="M1 8a5 5 0 0 0 10 0M6 13v3M3 17h6" stroke="#999" /></Svg>
        </SearchBox>
        <TaskIcon $w={46}>
          <Svg w={16} h={16}><path d="M0.500 0.500h3M0.500 15.500h3M9 0.500h3M9 15.500h3M1 5.500h10v6H1zM14 2h2M14 7h2M14 12h2" stroke="#fff" /></Svg>
        </TaskIcon>
        <TaskApp $w={145} $left={9} $pad={7}>
          <Svg w={22} h={22}>
            <circle cx="11" cy="11" r="10.500" fill="#e0392b" />
            <path d="M11 11L2 5.500A10.500 10.500 0 0 0 11 21.500z" fill="#3aa757" />
            <path d="M11 11v10.500A10.500 10.500 0 0 0 21.500 11z" fill="#f5c518" />
            <circle cx="11" cy="11" r="5" fill="#4285f4" stroke="#fff" strokeWidth="1.500" />
          </Svg>
          384.061 Objektori...
        </TaskApp>
        <TaskIcon $w={57}>
          <Svg w={20} h={24}><path d="M10 0l10 6v12l-10 6-10-6V6z" fill="#a9c23f" /><path d="M0 6l10 6v12l-10-6z" fill="#b4274b" /><path d="M20 6l-10 6v12l10-6z" fill="#3a7fc5" /><path d="M5 8l5-3 5 3v7l-5 3-5-3z" fill="#f2f2f2" /></Svg>
        </TaskIcon>
        <TaskApp $w={144} $pad={9} $gap={10}>
          <Svg w={16} h={23}><path d="M0 3l5-3h9v20l-5 3H2z" fill="#f0cf6a" /><path d="M9 3h6v18H9z" fill="#e0b33f" /></Svg>
          OOP
        </TaskApp>
        <TaskApp $w={152} $left={5} $active $pad={10}>
          <FoxitLogo size={24} label />
          OOP C2Java.pdf -...
        </TaskApp>
        <TaskApp $w={143} $left={4} $pad={6}>
          <FoxitLogo size={24} label />
          OOP_Folien_u_Bei...
        </TaskApp>
        <Tray>
          <TaskIcon $w={40}>
            <Svg w={16} h={16}><circle cx="11" cy="4" r="3" stroke="#fff" /><circle cx="5" cy="8" r="2.500" stroke="#fff" /><path d="M1 16c0-3 2-5 4-5s4 2 4 5M11 8c2 0 4 1 4.500 3" stroke="#fff" /></Svg>
          </TaskIcon>
          <TaskIcon $w={40}>
            <Svg w={12} h={7}><path d="M1 6l5-5 5 5" stroke="#fff" /></Svg>
          </TaskIcon>
          <TaskIcon $w={24}>
            <Svg w={17} h={14}><rect x="5.500" y="3.500" width="11" height="8" stroke="#fff" /><rect x="7" y="5" width="8" height="5" fill="#fff" /><path d="M3 0v5M1 0v5M0 5h4v3H2v4" stroke="#fff" /></Svg>
          </TaskIcon>
          <TaskIcon $w={42}>
            <Svg w={16} h={14}><path d="M1 13a12 12 0 0 1 12-12M4 13a9 9 0 0 1 9-9M7 13a6 6 0 0 1 6-6" stroke="#888" /><circle cx="11" cy="12" r="1.500" fill="#fff" /></Svg>
          </TaskIcon>
          <TaskIcon $w={18}>
            <Svg w={14} h={14}><path d="M1 5h2l4-4v12L3 9H1z" stroke="#fff" /><path d="M9 5a3 3 0 0 1 0 4M11 3a6 6 0 0 1 0 8" stroke="#888" /></Svg>
          </TaskIcon>
          <TaskIcon $w={50}>DEU</TaskIcon>
          <Clock><span>2:50 PM</span><span>3/17/2019</span></Clock>
          <TaskIcon $w={54}>
            <Svg w={16} h={16}><path d="M0 0h16v12H9l-2 3v-3H0z" fill="#fff" /><path d="M3 3h10M3 6h10M3 9h7" stroke="#111" /></Svg>
          </TaskIcon>
          <ShowDesktop />
        </Tray>
      </Taskbar>
    </>
  );
}
